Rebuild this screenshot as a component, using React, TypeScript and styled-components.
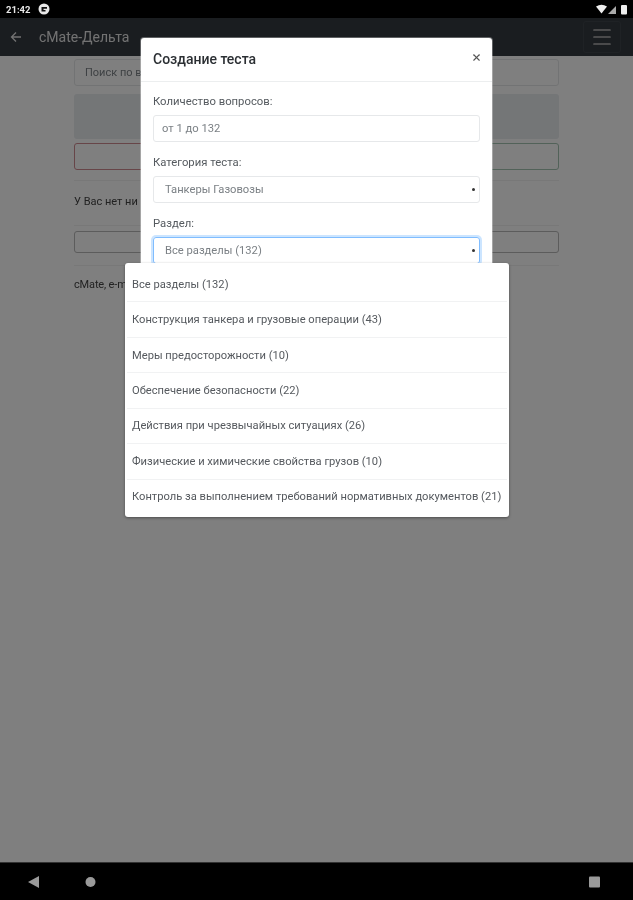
import styled, { createGlobalStyle } from 'styled-components';
import { Menu, X } from 'lucide-react';

const GlobalStyle = createGlobalStyle`
  html, body { margin: 0; padding: 0; background: #000; }
  body { font-family: Roboto, "Liberation Sans", sans-serif; }
  * { box-sizing: border-box; }
`;

const Screen = styled.div`
  position: relative;
  width: 633px;
  height: 900px;
  display: flex;
  flex-direction: column;
  overflow: hidden;
  filter: blur(0.75px);
`;

const StatusBar = styled.div`
  position: relative;
  z-index: 3;
  height: 18px;
  padding: 0 5px 0 6px;
  background: #000;
  display: flex;
  align-items: center;
  gap: 8px;
  color: #e8e8e8;
  font-size: 9.5px;
  font-weight: 700;
`;

const StatusIcons = styled.div`
  margin-left: auto;
  display: flex;
  align-items: center;
`;

const NavBar = styled.div`
  height: 38px;
  padding: 0 12px 0 10px;
  background: #343a40;
  display: flex;
  align-items: center;
  color: #e4e4e4;
`;

const NavTitle = styled.span`
  margin-left: 17px;
  font-size: 14px;
`;

const BurgerBox = styled.div`
  margin-left: auto;
  padding: 3px 6px;
  border: 1px solid #3f454b;
  border-radius: 3px;
  color: #b4b4b4;
  display: flex;
`;

const Page = styled.main`
  flex: 1;
  background: #fff;
  padding: 3px 74px 0;
  display: flex;
  flex-direction: column;
  font-size: 11px;
  color: #444;
`;

const SearchInput = styled.div`
  height: 27px;
  padding: 0 10px;
  border: 1px solid #e4e6e8;
  border-radius: 3px;
  display: flex;
  align-items: center;
  color: #7d8388;
`;

const GrayBlock = styled.div`
  height: 45px;
  margin-top: 8px;
  border-radius: 3px;
  background: #e9ecef;
`;

const ButtonRow = styled.div`
  display: flex;
  height: 27px;
  margin: 4px 0 10px;
`;

const OutlineButton = styled.div<{ $tone: string }>`
  flex: 1;
  border: 1px solid ${p => p.$tone};
  border-radius: 3px;
`;

const Separator = styled.hr`
  width: 100%;
  margin: 0;
  border: 0;
  border-top: 1px solid #f0f0f0;
`;

const Notice = styled.p`
  margin: 14px 0 16px;
  line-height: 14px;
`;

const PlainOutline = styled.div`
  height: 22px;
  margin: 5px 0 12px;
  border: 1px solid #b8b8b8;
  border-radius: 3px;
`;

const Contact = styled.p`
  margin: 12px 0 0;
  line-height: 14px;
  letter-spacing: -0.15px;
  white-space: nowrap;
`;

const BottomBar = styled.div`
  position: relative;
  z-index: 3;
  height: 38px;
  background: #000;
  border-top: 1px solid #333;
  padding: 0 28px;
  display: flex;
  align-items: center;
  color: #9a9a9a;
`;

const BottomGlyphs = styled.svg`
  width: 577px;
  height: 14px;
`;

const Backdrop = styled.div`
  position: absolute;
  inset: 18px 0 38px;
  z-index: 1;
  background: rgba(0, 0, 0, 0.5);
`;

const Modal = styled.section`
  position: absolute;
  z-index: 2;
  left: 141px;
  top: 38px;
  width: 351px;
  height: 300px;
  background: #fff;
  border-radius: 3px;
  box-shadow: 0 0 0 1px rgba(255, 255, 255, 0.3);
`;

const ModalHeader = styled.header`
  height: 44px;
  padding: 0 12px;
  border-bottom: 1px solid #eceeef;
  display: flex;
  align-items: center;
  justify-content: space-between;
`;

const ModalTitle = styled.h5`
  margin: 0 0 1px;
  font-size: 14px;
  font-weight: 500;
  color: #2b2f33;
`;

const CloseButton = styled.div`
  display: flex;
  margin: 0 -2px 4px 0;
  color: #555;
`;

const ModalBody = styled.div`
  padding: 13px 12px 0;
`;

const FieldLabel = styled.label`
  display: block;
  height: 14px;
  line-height: 14px;
  font-size: 11.3px;
  color: #555a5f;
`;

const Field = styled.div<{ $select?: boolean; $focused?: boolean }>`
  position: relative;
  height: 27px;
  margin: 6px 0 14px;
  padding: 0 ${p => (p.$select ? 11 : 8)}px;
  border: 1px solid ${p => (p.$focused ? '#80bdff' : '#e6e8ea')};
  box-shadow: ${p => (p.$focused ? '0 0 0 2px rgba(128, 189, 255, 0.4)' : 'none')};
  border-radius: 3px;
  display: flex;
  align-items: center;
  font-size: 11.2px;
  color: #7b8085;
`;

const Caret = styled.span`
  position: absolute;
  right: 4px;
  top: 11px;
  width: 3px;
  height: 3px;
  border-radius: 50%;
  background: #333;
`;

const Dropdown = styled.ul`
  position: absolute;
  z-index: 2;
  left: 125px;
  top: 263px;
  width: 384px;
  height: 254px;
  margin: 0;
  padding: 4px 0 3px;
  list-style: none;
  background: #fff;
  border-radius: 3px;
  box-shadow: 0 1px 3px rgba(0, 0, 0, 0.4);
  display: flex;
  flex-direction: column;
`;

const DropdownItem = styled.li`
  flex: 1;
  margin: 0 2px;
  padding: 0 5px;
  display: flex;
  align-items: center;
  font-size: 11.16px;
  color: #55595e;
  white-space: nowrap;
  & + & { border-top: 1px solid #f1f2f3; }
`;

const sections = [
  'Все разделы (132)',
  'Конструкция танкера и грузовые операции (43)',
  'Меры предосторожности (10)',
  'Обеспечение безопасности (22)',
  'Действия при чрезвычайных ситуациях (26)',
  'Физические и химические свойства грузов (10)',
  'Контроль за выполнением требований нормативных документов (21)',
];

export default function App() {
  return (
    <Screen>
      <GlobalStyle />
      <StatusBar>
        <span>21:42</span>
        <svg width="12" height="12" viewBox="0 0 12 12">
          <circle cx="6" cy="6" r="5.5" fill="#e8e8e8" />
          <path d="M3.5 4h5.5v1.7H5.5v1.2h2v1.6h-4z" fill="#111" />
        </svg>
        <StatusIcons>
          <svg width="32" height="11" viewBox="0 0 32 11">
            <path d="M0 2.5Q5.5-1 11 2.5L5.5 9.5z" fill="#eee" />
            <path d="M12 10L20 2v8z" fill="#aaa" />
            <rect x="25" y="1" width="6" height="9.5" rx="1" fill="#eee" />
          </svg>
        </StatusIcons>
      </StatusBar>
      <NavBar>
        <svg width="12" height="12" viewBox="0 0 12 12" fill="none" stroke="currentColor" strokeWidth="1.3">
          <path d="M11 6H1.5M6 1.5L1.5 6 6 10.5" />
        </svg>
        <NavTitle>cMate-Дельта</NavTitle>
        <BurgerBox>
          <Menu size={24} strokeWidth={1.7} />
        </BurgerBox>
      </NavBar>
      <Page>
        <SearchInput>Поиск по вопросам</SearchInput>
        <GrayBlock />
        <ButtonRow>
          <OutlineButton $tone="#cf8a90" />
          <OutlineButton $tone="#a5c4b3" />
        </ButtonRow>
        <Separator />
        <Notice>У Вас нет ни одного теста</Notice>
        <Separator />
        <PlainOutline />
        <Separator />
        <Contact>cMate, e-m</Contact>
      </Page>
      <BottomBar>
        <BottomGlyphs viewBox="0 0 577 14">
          <path d="M0 7L11 1V13z" fill="currentColor" />
          <circle cx="62.5" cy="7" r="5" fill="currentColor" />
          <rect x="561" y="1.5" width="11" height="11" rx="1" fill="currentColor" />
        </BottomGlyphs>
      </BottomBar>
      <Backdrop />
      <Modal>
        <ModalHeader>
          <ModalTitle>Создание теста</ModalTitle>
          <CloseButton>
            <X size={11} strokeWidth={2.4} />
          </CloseButton>
        </ModalHeader>
        <ModalBody>
          <FieldLabel>Количество вопросов:</FieldLabel>
          <Field>от 1 до 132</Field>
          <FieldLabel>Категория теста:</FieldLabel>
          <Field $select>
            Танкеры Газовозы
            <Caret />
          </Field>
          <FieldLabel>Раздел:</FieldLabel>
          <Field $select $focused>
            Все разделы (132)
            <Caret />
          </Field>
        </ModalBody>
      </Modal>
      <Dropdown>
        {sections.map(s => (
          <DropdownItem key={s}>{s}</DropdownItem>
        ))}
      </Dropdown>
    </Screen>
  );
}
